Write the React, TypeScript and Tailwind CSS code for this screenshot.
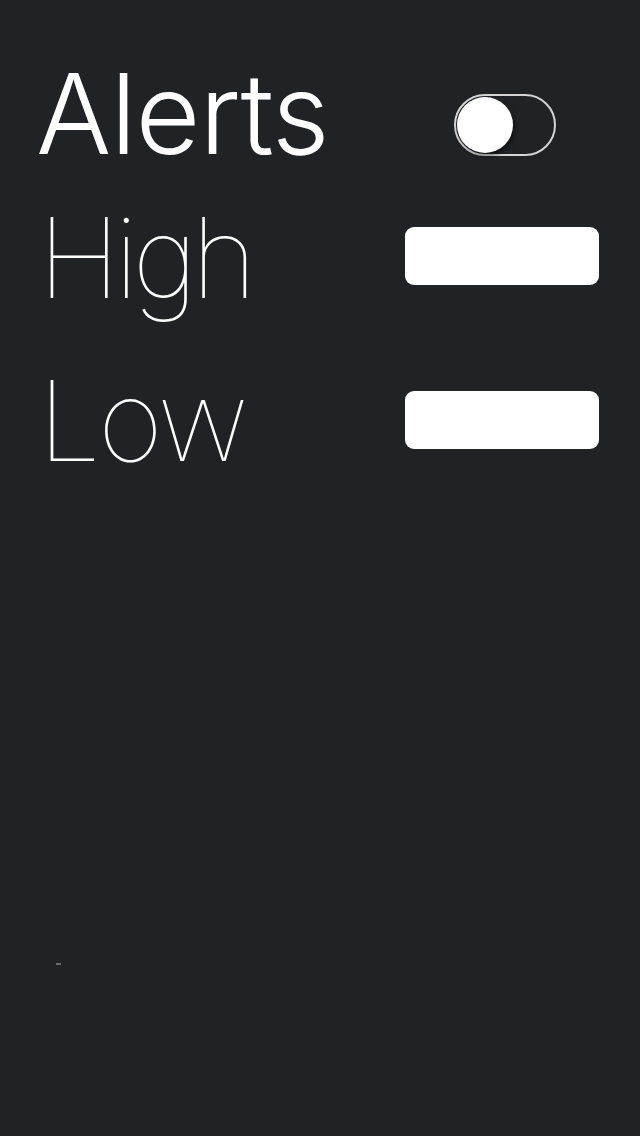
import React, { useState } from 'react';

const Toggle = ({ on, onChange }: { on: boolean; onChange: (v: boolean) => void }) => (
  <button
    type="button"
    onClick={() => onChange(!on)}
    className={
      'flex h-[62px] w-[102px] items-center rounded-full border-2 border-[#d4d4d6] bg-[#212226] px-px ' +
      (on ? 'justify-end' : 'justify-start')
    }
  >
    <span className="h-[56px] w-[56px] rounded-full bg-white shadow-[2px_3px_4px_rgba(0,0,0,0.45)]" />
  </button>
);

const App = () => {
  const [alerts, setAlerts] = useState(false);
  const [high, setHigh] = useState('');
  const [low, setLow] = useState('');

  return (
    <div
      className="relative flex min-h-[1136px] w-full flex-col bg-[#212226] pl-[36px] pr-[41px] pt-[57px] text-white"
      style={{ fontFamily: 'Inter, "Noto Sans", sans-serif' }}
    >
      <div className="flex h-[112px] items-start justify-between">
        <h1 className="text-[112px] font-light leading-none tracking-[-1px]">Alerts</h1>
        <div className="mr-[43px] mt-[37px]">
          <Toggle on={alerts} onChange={setAlerts} />
        </div>
      </div>

      <div className="mt-[32px] flex h-[112px] items-start justify-between">
        <span className="ml-[2px] text-[112px] font-thin leading-none tracking-[-6px]">High</span>
        <input
          value={high}
          onChange={(e) => setHigh(e.target.value)}
          className="mt-[26px] h-[58px] w-[194px] rounded-[9px] bg-white px-3 text-2xl text-black outline-none"
        />
      </div>

      <div className="mt-[51px] flex h-[112px] items-start justify-between">
        <span className="ml-[2px] text-[112px] font-thin leading-none tracking-[-3px]">Low</span>
        <input
          value={low}
          onChange={(e) => setLow(e.target.value)}
          className="mt-[27px] h-[58px] w-[194px] rounded-[9px] bg-white px-3 text-2xl text-black outline-none"
        />
      </div>

      <span className="absolute left-[56px] top-[963px] h-[2px] w-[5px] bg-[#6b6c70]" />
    </div>
  );
};

export default App;
